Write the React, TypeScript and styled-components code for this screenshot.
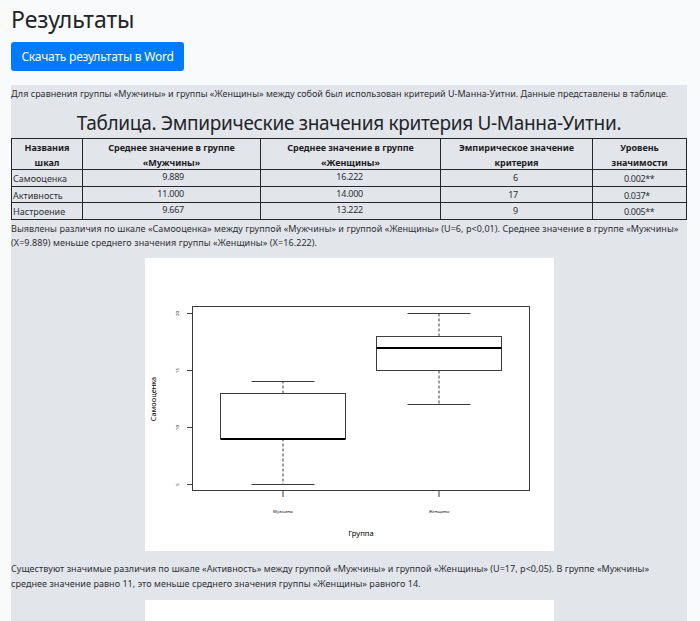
import React from 'react';
import styled, { createGlobalStyle } from 'styled-components';

const GlobalStyle = createGlobalStyle`
  * { box-sizing: border-box; }
  body {
    margin: 0;
    height: 621px;
    overflow: hidden;
    background: #f8fafc;
    color: #212529;
    font-family: "Noto Sans", "Open Sans", sans-serif;
    font-size: 9px;
  }
`;

const Page = styled.main`
  display: flex;
  flex-direction: column;
  align-items: flex-start;
  width: 700px;
  height: 621px;
  padding: 4px 13px 0 11px;
  overflow: hidden;
`;

const Title = styled.h1`
  flex: none;
  margin: 0 0 8px;
  height: 30px;
  font-size: 23px;
  font-weight: 400;
  line-height: 30px;
  letter-spacing: -0.05px;
`;

const DownloadButton = styled.button`
  flex: none;
  width: 173px;
  height: 29px;
  padding: 0;
  border: 0;
  border-radius: 3px;
  background: #007bff;
  color: #fff;
  font-family: inherit;
  font-size: 12px;
  line-height: 30px;
  letter-spacing: -0.21px;
  white-space: nowrap;
`;

const Report = styled.section`
  display: flex;
  flex: none;
  flex-direction: column;
  width: 676px;
  margin-top: 14px;
  background: #e2e5ea;
`;

const Paragraph = styled.p<{ $top?: number; $bottom?: number }>`
  margin: 0;
  padding: ${(p) => p.$top ?? 0}px 0 ${(p) => p.$bottom ?? 0}px;
  color: #2c3035;
`;

const Line = styled.span<{ $tracking: number }>`
  display: block;
  line-height: 14.5px;
  letter-spacing: ${(p) => p.$tracking}px;
  white-space: nowrap;
`;

const Caption = styled.h2`
  margin: 0;
  height: 30px;
  font-size: 19px;
  font-weight: 400;
  line-height: 30px;
  letter-spacing: -0.31px;
  text-align: center;
  white-space: nowrap;
`;

const Table = styled.div`
  display: grid;
  grid-template-columns: 71px 178px 180px 152px 94px;
  grid-template-rows: 31px 17px 16px 17px;
  border-top: 1px solid #24262b;
  border-left: 1px solid #24262b;
`;

const Cell = styled.div`
  border-right: 1px solid #24262b;
  border-bottom: 1px solid #24262b;
  color: #2c3035;
  line-height: 13px;
  white-space: nowrap;
  overflow: hidden;
`;

const HeadCell = styled(Cell)`
  padding-top: 2px;
  color: #1a1d21;
  font-weight: 700;
  line-height: 14.5px;
  letter-spacing: -0.02px;
  text-align: center;
`;

const NameCell = styled(Cell)`
  padding: 2px 0 0 1px;
`;

const NumberCell = styled(Cell)<{ $right: number; $top: number }>`
  padding: ${(p) => p.$top}px ${(p) => p.$right}px 0 0;
  letter-spacing: -0.25px;
  text-align: right;
`;

const LevelCell = styled(Cell)`
  padding: 2px 0 0 31px;
  letter-spacing: -0.35px;
`;

const Figure = styled.figure<{ $height: number }>`
  width: 409px;
  height: ${(p) => p.$height}px;
  margin: 0 0 0 134px;
  background: #fff;
`;

const Plot = styled.svg`
  display: block;
  font-family: "Noto Sans", sans-serif;
`;

const rows = [
  { name: 'Самооценка', men: '9.889', women: '16.222', u: '6', level: '0.002**' },
  { name: 'Активность', men: '11.000', women: '14.000', u: '17', level: '0.037*' },
  { name: 'Настроение', men: '9.667', women: '13.222', u: '9', level: '0.005**' },
];

const heads = [
  ['Названия', 'шкал'],
  ['Среднее значение в группе', '«Мужчины»'],
  ['Среднее значение в группе', '«Женщины»'],
  ['Эмпирическое значение', 'критерия'],
  ['Уровень', 'значимости'],
];

const groups = [
  { label: 'Мужчины', x: 138, min: 5, q1: 9, median: 9, q3: 13, max: 14 },
  { label: 'Женщины', x: 294, min: 12, q1: 15, median: 17, q3: 18, max: 20 },
];

const ticks = [20, 15, 10, 5];

// Vertical position of a value on the plot's scale, snapped to a pixel centre.
const y = (value: number) => Math.floor(55.3 + (20 - value) * 11.4) + 0.5;

function BoxPlot() {
  return (
    <Plot width="409" height="293" viewBox="0 0 409 293">
      <g fill="none" stroke="#3c3c3c" strokeWidth="1">
        <rect x="47.5" y="48.5" width="337" height="184" />
        {ticks.map((v) => (
          <path key={v} d={`M42 ${y(v)}H47.5`} />
        ))}
        {groups.map((g) => (
          <g key={g.label}>
            <path d={`M${g.x} 232.5V239`} />
            <path d={`M${g.x - 31.5} ${y(g.max)}h63M${g.x - 31.5} ${y(g.min)}h63`} />
            <path
              d={`M${g.x} ${y(g.q3)}V${y(g.max)}M${g.x} ${y(g.q1)}V${y(g.min)}`}
              strokeDasharray="3 2"
            />
            <rect
              x={g.x - 62.5}
              y={y(g.q3)}
              width="125"
              height={y(g.q1) - y(g.q3)}
            />
            <path
              d={`M${g.x - 62.5} ${y(g.median) + 0.5}h125`}
              stroke="#000"
              strokeWidth="2"
            />
          </g>
        ))}
      </g>
      <g fill="#111" textAnchor="middle">
        {ticks.map((v) => (
          <text key={v} fontSize="4.3" transform={`translate(34 ${y(v)}) rotate(-90)`}>
            {v}
          </text>
        ))}
        {groups.map((g) => (
          <text key={g.label} x={g.x} y="254.5" fontSize="4.2">
            {g.label}
          </text>
        ))}
        <text x="216" y="277.5" fontSize="7.7" fill="#000">
          Группа
        </text>
        <text fontSize="7.4" fill="#000" transform="translate(10.5 141) rotate(-90)">
          Самооценка
        </text>
      </g>
    </Plot>
  );
}

export default function App() {
  return (
    <>
      <GlobalStyle />
      <Page>
        <Title>Результаты</Title>
        <DownloadButton>Скачать результаты в Word</DownloadButton>
        <Report>
          <Paragraph $top={1.5} $bottom={7}>
            <Line $tracking={0.01}>
              Для сравнения группы «Мужчины» и группы «Женщины» между собой был использован критерий U-Манна-Уитни. Данные представлены в таблице.
            </Line>
          </Paragraph>
          <Caption>Таблица. Эмпирические значения критерия U-Манна-Уитни.</Caption>
          <Table>
            {heads.map(([first, second], i) => (
              <HeadCell key={i}>
                {first}
                <br />
                {second}
              </HeadCell>
            ))}
            {rows.map((r) => (
              <React.Fragment key={r.name}>
                <NameCell>{r.name}</NameCell>
                <NumberCell $right={76} $top={0}>{r.men}</NumberCell>
                <NumberCell $right={77} $top={0}>{r.women}</NumberCell>
                <NumberCell $right={74} $top={1}>{r.u}</NumberCell>
                <LevelCell>{r.level}</LevelCell>
              </React.Fragment>
            ))}
          </Table>
          <Paragraph $top={1.5} $bottom={7.5}>
            <Line $tracking={0.055}>
              Выявлены различия по шкале «Самооценка» между группой «Мужчины» и группой «Женщины» (U=6, p&lt;0,01). Среднее значение в группе «Мужчины»
            </Line>
            <Line $tracking={0.08}>
              (X=9.889) меньше среднего значения группы «Женщины» (X=16.222).
            </Line>
          </Paragraph>
          <Figure $height={293}>
            <BoxPlot />
          </Figure>
          <Paragraph $top={11} $bottom={9}>
            <Line $tracking={0.04}>
              Существуют значимые различия по шкале «Активность» между группой «Мужчины» и группой «Женщины» (U=17, p&lt;0,05). В группе «Мужчины»
            </Line>
            <Line $tracking={0.045}>
              среднее значение равно 11, это меньше среднего значения группы «Женщины» равного 14.
            </Line>
          </Paragraph>
          <Figure $height={40} />
        </Report>
      </Page>
    </>
  );
}
